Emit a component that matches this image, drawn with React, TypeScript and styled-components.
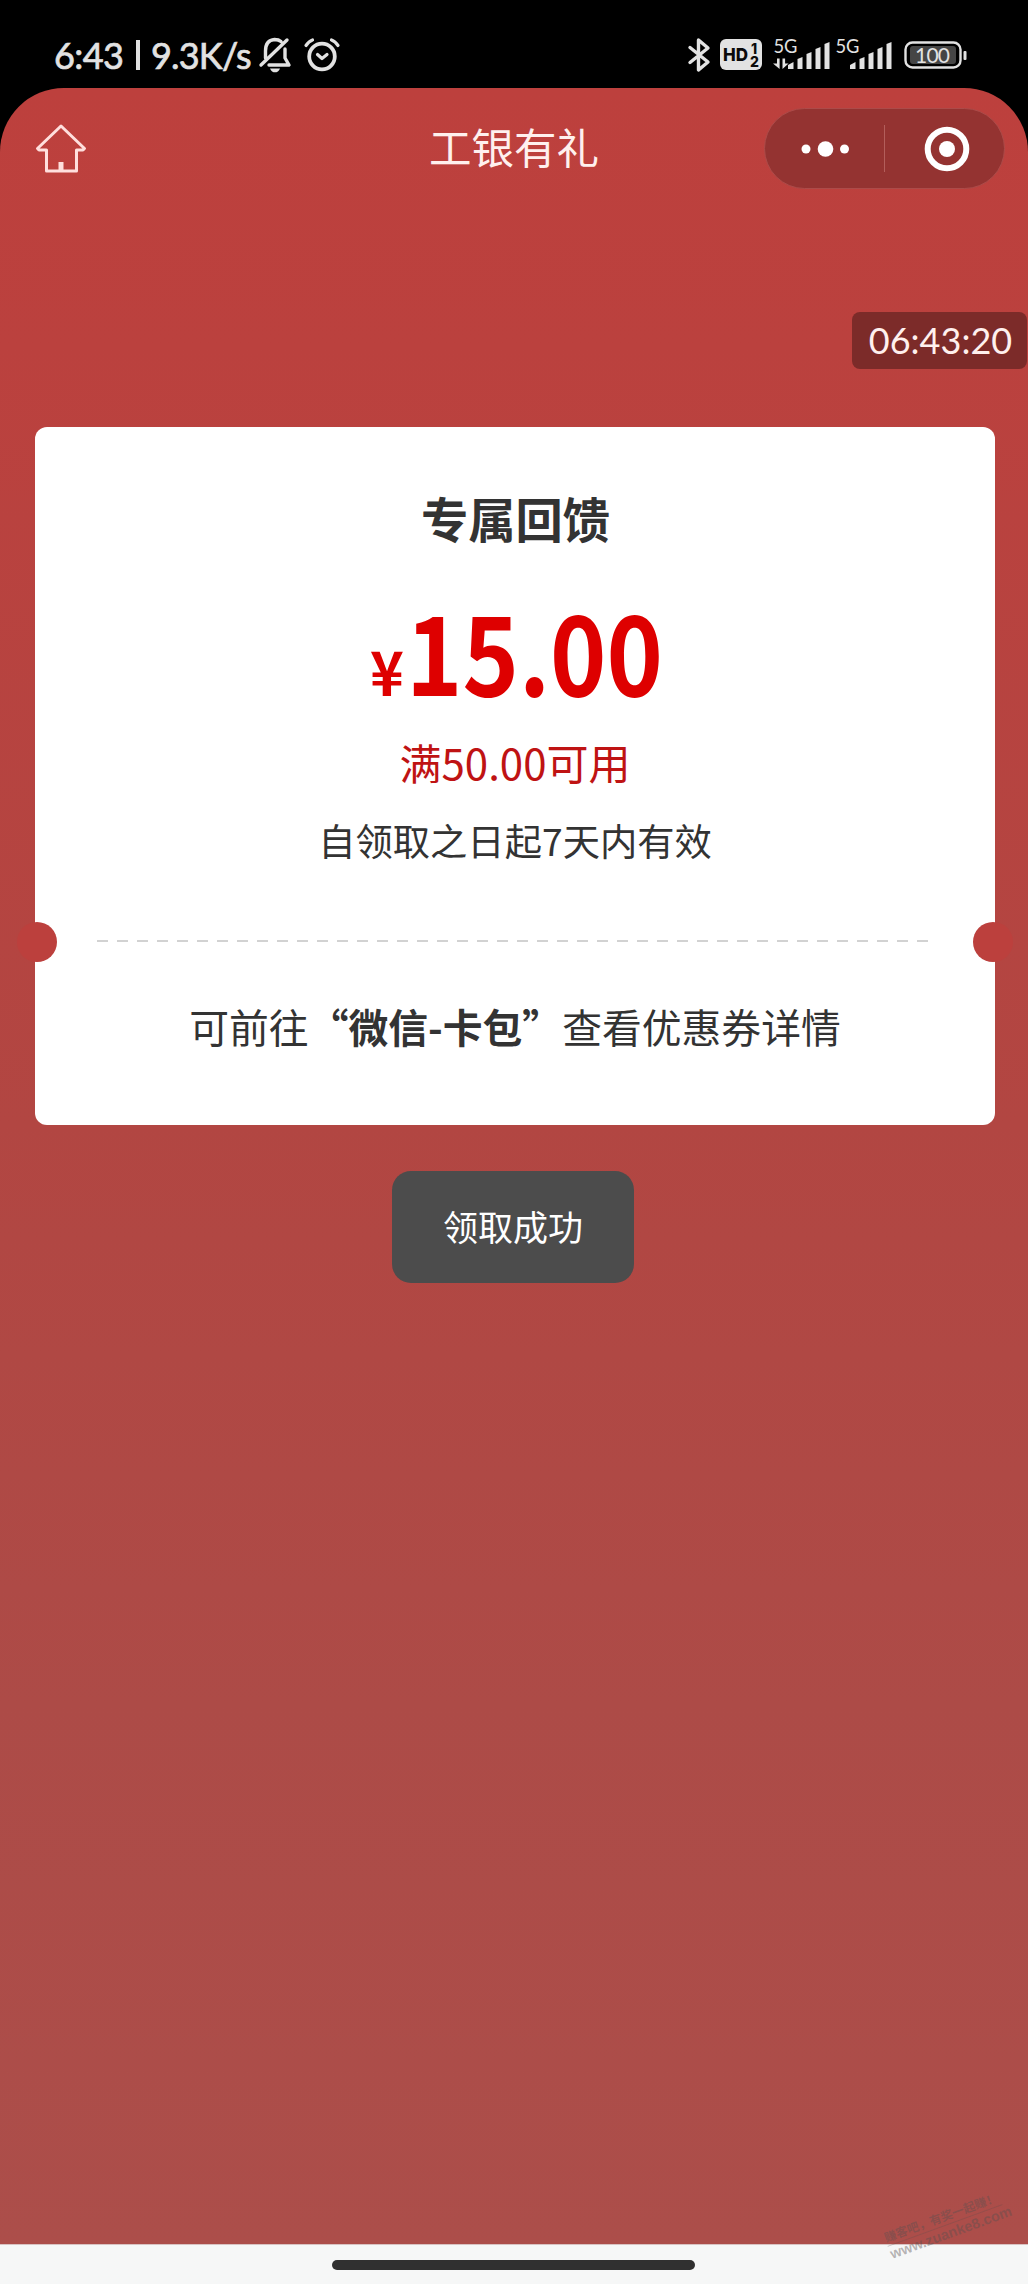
import React from "react";
import styled, { createGlobalStyle } from "styled-components";

const cjk = `"Noto Sans CJK SC", sans-serif`;
const latin = `Lato, "Noto Sans CJK SC", sans-serif`;

const GlobalStyle = createGlobalStyle`
  * { box-sizing: border-box; }
  body { margin: 0; background: #000; font-family: ${cjk}; }
`;

const Screen = styled.div`
  position: relative;
  width: 1028px;
  height: 2284px;
  display: flex;
  flex-direction: column;
  overflow: hidden;
  background: #000;
`;

const StatusBar = styled.header`
  flex: none;
  height: 88px;
  padding: 22px 61px 0 54px;
  display: flex;
  justify-content: space-between;
  color: #e2e2e2;
  font-family: ${latin};
`;

const StatusGroup = styled.div`
  display: flex;
  align-items: center;
  height: 66px;
`;

const StatusText = styled.span<{ $width: number; $spacing?: number }>`
  width: ${(p) => p.$width}px;
  font-size: 36px;
  line-height: 66px;
  font-weight: 400;
  letter-spacing: ${(p) => p.$spacing ?? 0}px;
  -webkit-text-stroke: 0.7px #e2e2e2;
  white-space: nowrap;
`;

const StatusDivider = styled.i`
  width: 4px;
  height: 30px;
  margin-right: 11px;
  background: #e2e2e2;
`;

const Icon = styled.svg<{ $gap?: number }>`
  flex: none;
  display: block;
  margin-left: ${(p) => p.$gap ?? 0}px;
  overflow: visible;
`;

const Page = styled.main`
  flex: 1;
  display: flex;
  flex-direction: column;
  align-items: center;
  border-radius: 64px 64px 0 0;
  background: linear-gradient(180deg, #bd403d 0%, #bb413e 12%, #b24642 48%, #ad4b47 75%, #ac4e4a 100%);
`;

const NavBar = styled.nav`
  width: 100%;
  height: 121px;
  padding: 0 24px 0 36px;
  display: grid;
  grid-template-columns: 239px 1fr 239px;
  align-items: center;
`;

const NavTitle = styled.h1`
  margin: 0 0 5px;
  padding-right: 12px;
  text-align: center;
  color: #fff0ee;
  font-size: 42.5px;
  line-height: 60px;
  font-weight: 400;
`;

const Capsule = styled.div`
  width: 241px;
  height: 81px;
  margin-left: -1px;
  display: flex;
  align-items: center;
  border: 1.5px solid #ac4b49;
  border-radius: 41px;
  background: #943331;
`;

const CapsuleButton = styled.button`
  flex: 1;
  height: 100%;
  padding: 0;
  display: flex;
  align-items: center;
  justify-content: center;
  border: 0;
  background: none;
`;

const CapsuleRule = styled.i`
  width: 1px;
  height: 47px;
  background: #b35e5b;
`;

const ClockTag = styled.time`
  align-self: flex-end;
  width: 175px;
  height: 57px;
  margin: 103px 1px 0 0;
  padding-left: 2px;
  border-radius: 8px;
  background: #7c2b29;
  color: #fff0ee;
  font: 400 36px/57px ${latin};
  text-align: center;
`;

const Coupon = styled.section`
  width: 960px;
  height: 698px;
  margin: 58px 0 0 2px;
  display: flex;
  flex-direction: column;
  align-items: center;
  border-radius: 12px;
  background: #fff;
  color: #333;
`;

const CouponTitle = styled.h2`
  margin: 56px 0 0 1px;
  font-size: 47.3px;
  line-height: 70px;
  font-weight: 700;
`;

const Price = styled.div`
  width: 300px;
  height: 160px;
  margin-top: 15px;
  display: flex;
  align-items: baseline;
  color: #de0000;
  font-weight: 700;
  line-height: 160px;
`;

const Currency = styled.span`
  width: 39px;
  margin-left: 5px;
  font-size: 61px;
  transform: scaleX(0.94);
  transform-origin: left;
`;

const Amount = styled.span`
  font-size: 110px;
  transform: scaleX(0.87);
  transform-origin: left;
`;

const Condition = styled.p`
  margin: 4px 0 0;
  color: #bf1313;
  font-size: 42px;
  line-height: 60px;
`;

const Validity = styled.p`
  margin: 20px 0 0;
  font-size: 37.3px;
  line-height: 56px;
`;

const TearLine = styled.div`
  width: 1000px;
  height: 40px;
  margin-top: 54px;
  display: flex;
  align-items: center;
  justify-content: space-between;
`;

const Notch = styled.i`
  width: 40px;
  height: 40px;
  margin: 0 2px;
  border-radius: 50%;
  background: #bc403d;
`;

const Dashes = styled.i`
  width: 832px;
  height: 2px;
  margin: 0 5px 2px 0;
  background: repeating-linear-gradient(90deg, #d2d2d2 0 11px, transparent 11px 20px);
`;

const Hint = styled.p`
  margin: 34px 0 0;
  font-size: 39.8px;
  line-height: 60px;
  white-space: nowrap;
`;

const Toast = styled.div`
  width: 242px;
  height: 112px;
  margin: 46px 2px 0 0;
  border-radius: 19px;
  background: #4c4c4c;
  color: #fff;
  font-size: 35px;
  line-height: 109px;
  text-align: center;
`;

const GestureArea = styled.footer`
  flex: none;
  height: 40px;
  padding-top: 15px;
  border-top: 1px solid #d9c3c2;
  background: #f6f7f7;
`;

const GestureBar = styled.div`
  width: 363px;
  height: 10px;
  margin-left: 332px;
  border-radius: 5px;
  background: #303030;
`;

const Watermark = styled.div`
  position: absolute;
  left: 884px;
  top: 2208px;
  width: 122px;
  transform: rotate(-20deg);
  color: rgba(90, 80, 80, 0.42);
  font: 700 12px/17px ${latin};
  white-space: nowrap;
`;

const WatermarkSite = styled.div`
  border-top: 1px solid rgba(90, 80, 80, 0.3);
  font-family: "Liberation Sans", sans-serif;
  font-size: 14.5px;
  line-height: 17px;
`;

const MutedBell = () => (
  <Icon width="32" height="36" viewBox="0 0 32 36" $gap={0} fill="none" stroke="#e2e2e2" strokeWidth="3.400" strokeLinecap="round" strokeLinejoin="round">
    <path d="M2 28 28 3M6.500 21V14C6.500 7 10 3 15.500 2.500c3 0 5 .7 6.500 2M26 12v9l4 7H10" />
    <path d="M11 31.500h10c-1 3-3 3.800-5 3.800s-4-.8-5-3.800z" fill="#e2e2e2" stroke="none" />
  </Icon>
);

const AlarmClock = () => (
  <Icon width="36" height="34" viewBox="0 0 36 34" $gap={13} fill="none" stroke="#e2e2e2" strokeWidth="3.800" strokeLinecap="round" strokeLinejoin="round">
    <circle cx="18" cy="18.500" r="12.800" />
    <path d="m13.500 16.500 4.500 4 5-4M2 7.500C4 4.500 5.500 3 8.500 2M34 7.500C32 4.500 30.500 3 27.500 2" strokeWidth="3.200" />
  </Icon>
);

const Bluetooth = () => (
  <Icon width="22" height="34" viewBox="0 0 22 34" fill="none" stroke="#e2e2e2" strokeWidth="3.400" strokeLinejoin="round" strokeLinecap="round">
    <path d="M2 9.500 20 24 10.500 32V2L20 10 2 24.500" />
  </Icon>
);

const HdBadge = () => (
  <Icon width="42" height="32" viewBox="0 0 42 32" $gap={10} fontFamily="Inter, sans-serif" fontWeight="800">
    <rect width="42" height="31" rx="6" fill="#e2e2e2" />
    <g fill="#0a0a0a">
      <text x="3" y="21.500" fontSize="18" textLength="25" lengthAdjust="spacingAndGlyphs">HD</text>
      <text x="31" y="14.500" fontSize="14">1</text>
      <text x="30" y="27.500" fontSize="14">2</text>
    </g>
  </Icon>
);

const Signal = ({ gap, traffic }: { gap: number; traffic?: boolean }) => (
  <Icon width="56" height="32" viewBox="0 0 56 32" $gap={gap} fill="#e2e2e2">
    <text x="-1.500" y="13.500" fontSize="19" fontFamily="Lato, sans-serif" textLength="24" lengthAdjust="spacingAndGlyphs">5G</text>
    {traffic && <path d="M2 19.500h2.600V30L-2 24.500h4zM7.500 30V19.500h2.600v5h3.400z" />}
    <path d="M13 26l5.500-3v7H13zM22.500 20l5-2v12h-5zM31.500 15l5-2v17h-5zM40.500 10l5-2v22h-5zM49.500 5l5-2v27h-5z" />
  </Icon>
);

const Battery = () => (
  <Icon width="63" height="28" viewBox="0 0 63 28" $gap={11}>
    <rect x="1.500" y="1.500" width="55" height="25" rx="7" fill="none" stroke="#e2e2e2" strokeWidth="2.400" />
    <rect x="6" y="5" width="46" height="18" rx="3" fill="#454545" />
    <rect x="59.500" y="10" width="3" height="9" rx="1" fill="#e2e2e2" />
    <text x="11" y="21.500" fill="#e2e2e2" fontSize="21" fontFamily="Lato, sans-serif" textLength="35">100</text>
  </Icon>
);

const Home = () => (
  <Icon width="50" height="49" viewBox="0 0 50 49" fill="none" stroke="#ffdfdd" strokeWidth="3" strokeLinejoin="round">
    <path d="M25 2 1.500 24.500 3 26h7.500v21h30V26H47l1.500-1.500z" />
    <path d="M22.500 38h5v9h-5z" fill="#ffdfdd" stroke="none" />
  </Icon>
);

export default function App() {
  return (
    <Screen>
      <GlobalStyle />
      <StatusBar>
        <StatusGroup>
          <StatusText $width={82} $spacing={-0.6}>6:43</StatusText>
          <StatusDivider />
          <StatusText $width={108} $spacing={-0.8}>9.3K/s</StatusText>
          <MutedBell />
          <AlarmClock />
        </StatusGroup>
        <StatusGroup>
          <Bluetooth />
          <HdBadge />
          <Signal gap={13} traffic />
          <Signal gap={6} />
          <Battery />
        </StatusGroup>
      </StatusBar>
      <Page>
        <NavBar>
          <Home />
          <NavTitle>工银有礼</NavTitle>
          <Capsule>
            <CapsuleButton aria-label="more">
              <Icon width="48" height="16" viewBox="0 0 48 16" fill="#fff">
                <circle cx="5" cy="8" r="4.500" />
                <circle cx="24.500" cy="8" r="7.800" />
                <circle cx="43.500" cy="8" r="4.500" />
              </Icon>
            </CapsuleButton>
            <CapsuleRule />
            <CapsuleButton aria-label="close">
              <Icon width="46" height="46" viewBox="0 0 46 46">
                <circle cx="25" cy="23" r="19.300" fill="none" stroke="#fff" strokeWidth="6" />
                <circle cx="25" cy="23" r="8" fill="#fff" />
              </Icon>
            </CapsuleButton>
          </Capsule>
        </NavBar>
        <ClockTag>06:43:20</ClockTag>
        <Coupon>
          <CouponTitle>专属回馈</CouponTitle>
          <Price>
            <Currency>¥</Currency>
            <Amount>15.00</Amount>
          </Price>
          <Condition>满50.00可用</Condition>
          <Validity>自领取之日起7天内有效</Validity>
          <TearLine>
            <Notch />
            <Dashes />
            <Notch />
          </TearLine>
          <Hint>
            可前往<b>“微信-卡包”</b>查看优惠券详情
          </Hint>
        </Coupon>
        <Toast>领取成功</Toast>
      </Page>
      <GestureArea>
        <GestureBar />
      </GestureArea>
      <Watermark>
        赚客吧，有奖一起赚！
        <WatermarkSite>www.zuanke8.com</WatermarkSite>
      </Watermark>
    </Screen>
  );
}
